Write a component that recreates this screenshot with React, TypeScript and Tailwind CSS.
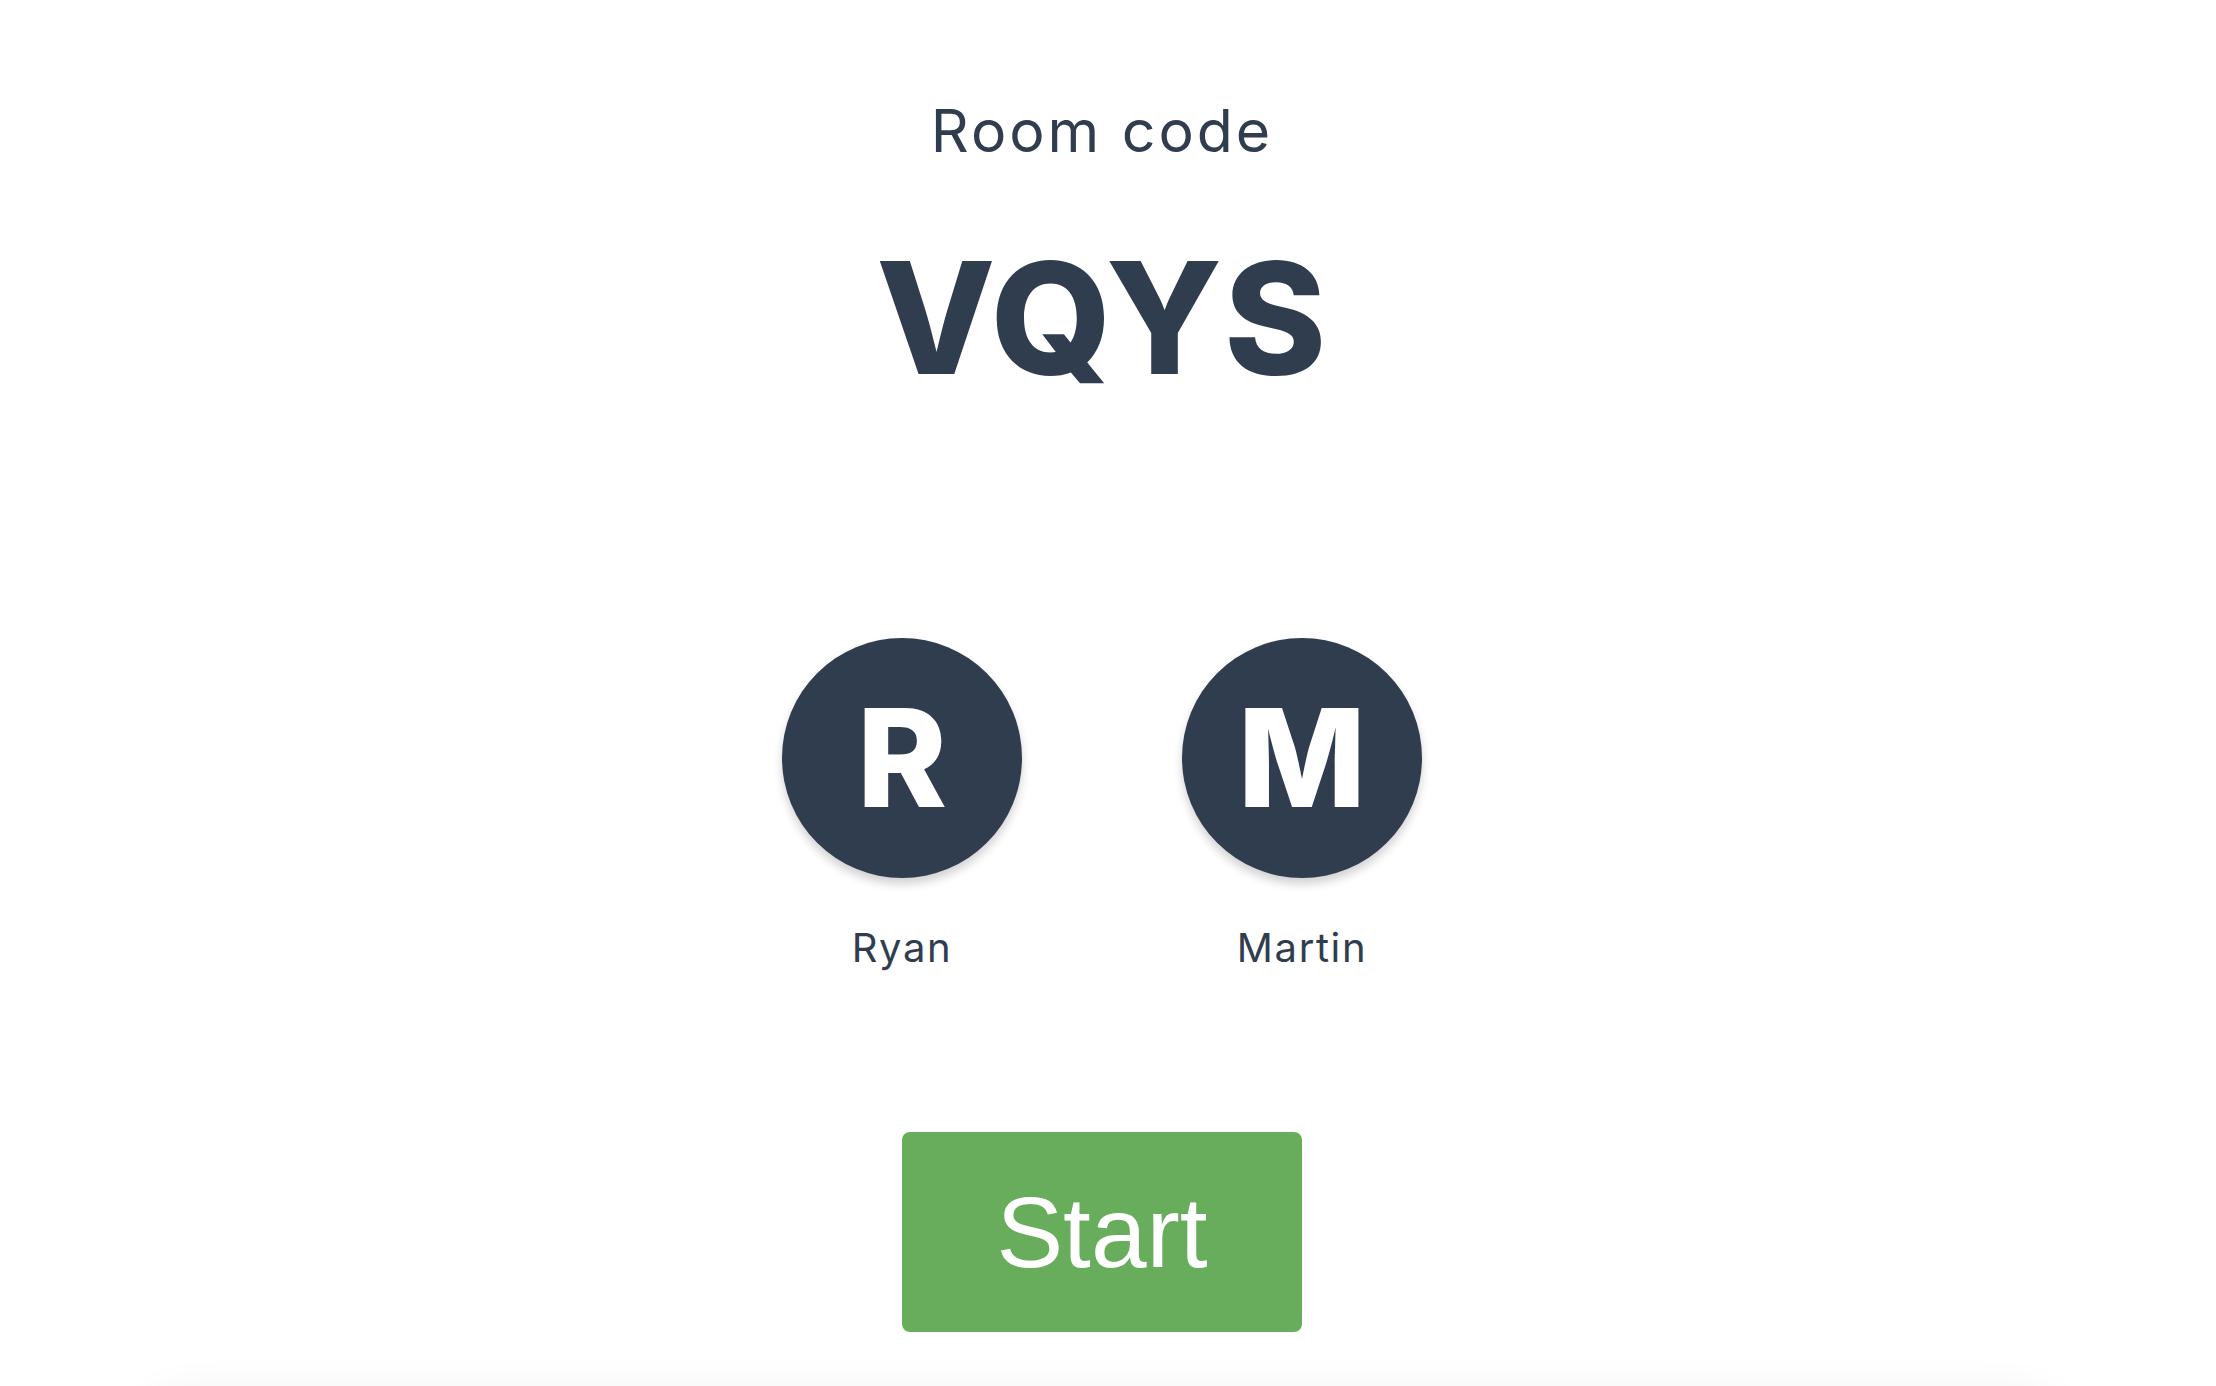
const players = [
  { name: 'Ryan', initial: 'R' },
  { name: 'Martin', initial: 'M' },
];

export default function App() {
  return (
    <div className="h-screen bg-white flex flex-col items-center pr-[12px] text-[#303d4f] font-['Inter',sans-serif] overflow-hidden">
      <div className="pt-[101px] text-[59px] leading-none font-normal tracking-[0.05em]">Room code</div>
      <div className="mt-[80px] text-[155px] leading-none font-extrabold tracking-[0.01em]">VQYS</div>

      <div className="mt-[243px] flex gap-[160px]">
        {players.map((p) => (
          <div key={p.name} className="flex flex-col items-center w-[240px]">
            <div className="w-[240px] h-[240px] shrink-0 rounded-full bg-[#303d4f] flex items-center justify-center shadow-[0_6px_10px_rgba(0,0,0,0.18)]">
              <span className="text-white text-[136px] leading-none font-extrabold">{p.initial}</span>
            </div>
            <div className="mt-[50px] text-[40px] leading-none tracking-[0.04em]">{p.name}</div>
          </div>
        ))}
      </div>

      <button className="mt-[164px] w-[400px] h-[200px] shrink-0 rounded-[8px] bg-[#68ad5c] text-white text-[100px] leading-none font-['Liberation_Sans',Arial,sans-serif] flex items-center justify-center">
        Start
      </button>

      <div className="mt-[60px] w-[1920px] h-[300px] shrink-0 rounded-[40px] bg-white shadow-[0_0_40px_rgba(0,0,0,0.06)]" />
    </div>
  );
}
